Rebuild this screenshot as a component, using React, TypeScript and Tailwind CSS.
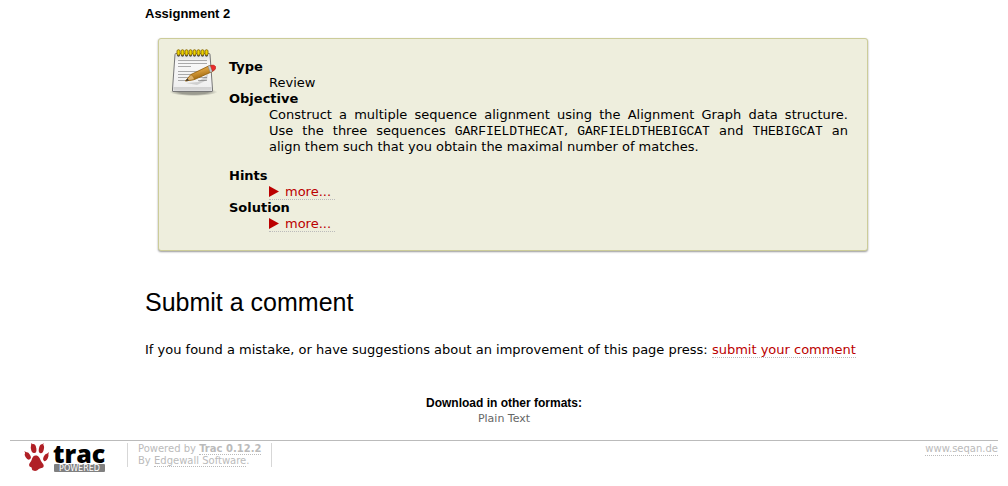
import React from 'react';

const linkLine = 'border-b border-dotted border-[#bbbbbb]';
const red = 'text-[#bb0000]';
const mono = "font-['Liberation_Mono',monospace] leading-3";

function NotepadIcon() {
  const rings = [0, 1, 2, 3, 4, 5, 6, 7];
  return (
    <svg width="48" height="48" viewBox="0 0 48 48" className="shrink-0" aria-hidden="true">
      <defs>
        <linearGradient id="paper" x1="0" y1="0" x2="0" y2="1">
          <stop offset="0" stopColor="#dcdcdc" />
          <stop offset="0.25" stopColor="#f8f8f8" />
          <stop offset="1" stopColor="#eeeeee" />
        </linearGradient>
        <linearGradient id="wood" x1="0" y1="0" x2="0.5" y2="1">
          <stop offset="0" stopColor="#f0c066" />
          <stop offset="0.5" stopColor="#d39838" />
          <stop offset="1" stopColor="#8f5902" />
        </linearGradient>
        <radialGradient id="shade">
          <stop offset="0.6" stopColor="#000" stopOpacity="0.35" />
          <stop offset="1" stopColor="#000" stopOpacity="0" />
        </radialGradient>
      </defs>
      <ellipse cx="23.5" cy="43" rx="24" ry="4" fill="url(#shade)" />
      <path d="M5 5.5 Q5 4.5 6 4.5 H39 Q40 4.5 40 5.5 L42.5 40 V42 Q42.5 42.5 42 42.5 H3 Q2.5 42.5 2.5 42 V40 Z" fill="url(#paper)" stroke="#777" />
      <path d="M3.5 39 H41.5" stroke="#b5b5b5" />
      <path d="M3.5 40.7 H41.5" stroke="#d5d5d5" strokeWidth="2" />
      <path d="M8 11.5 H37 M8 14.5 H37 M8 17.5 H21 M8 22.5 H31 M8 25.5 H25 M8 28.5 H20 M8 31.5 H15 M29 28.5 H37 M28 31.5 H37" stroke="#aaa" />
      <path d="M16 34 L28 33 L38 25 L37 31 L27 36 Z" fill="#000" opacity="0.14" />
      <path d="M15.5 32 L21 25.5 L38.5 17 Q42.5 15.5 45 17.5 Q46 20.5 42.5 22.5 L24.5 30.5 Z" fill="url(#wood)" stroke="#8f5902" strokeWidth="0.8" />
      <path d="M21 25.5 L15.5 32 L24.5 30.5 L23.5 28 Z" fill="#dcb06a" stroke="#8f5902" strokeWidth="0.5" />
      <path d="M15.5 32 L17.5 29.5 L19 31.5 Z" fill="#333" />
      <path d="M38 17.3 L40.2 16.4 L42.4 22.4 L40.3 23.5 Z" fill="#c7ccd2" stroke="#777" strokeWidth="0.4" />
      <path d="M40.5 16.4 Q43.8 15.3 45.5 17.5 Q46.4 20.6 42.7 22.3 Z" fill="#ee2a2a" stroke="#b43535" strokeWidth="0.6" />
      {rings.map((i) => (
        <g key={i}>
          <circle cx={8.5 + i * 4} cy="6.3" r="1.4" fill="#444" />
          <rect x={7 + i * 4} y="0.7" width="3" height="5.5" rx="1.5" fill="#edd400" stroke="#8a6a00" strokeWidth="0.9" />
        </g>
      ))}
    </svg>
  );
}

function TracLogo() {
  return (
    <svg width="82" height="30" viewBox="0 0 82 30" role="img" aria-label="Trac Powered" className="overflow-visible">
      <g fill="#b02026">
        <ellipse cx="9.6" cy="5.6" rx="2.7" ry="4.5" transform="rotate(-10 9.6 5.6)" />
        <ellipse cx="17.4" cy="5.8" rx="2.5" ry="4.5" transform="rotate(12 17.4 5.8)" />
        <ellipse cx="3.8" cy="13" rx="2.5" ry="3.9" transform="rotate(-32 3.8 13)" />
        <ellipse cx="21.8" cy="14.4" rx="2.2" ry="3.9" transform="rotate(24 21.8 14.4)" />
        <path d="M11.5 12.5 C14.5 12.2 15.7 15 17 18 C18.5 20.5 20.3 21.5 19.6 23.5 C18.8 25.6 16.2 24.8 14.8 26 C13.2 27.6 11.5 28.6 9.3 27.6 C7 26.5 8.6 24.6 6.8 24 C4.4 23.2 4.8 20.8 6.5 19 C8.2 17 8 12.8 11.5 12.5 Z" />
        <path d="M7.5 0 L6.9 3 L9.4 2 Z M19.6 0 L16.8 2.8 L19 3.6 Z M0.4 8 L1.6 11.6 L3.4 10 Z M25 9 L21.6 12 L23.9 12.8 Z" />
      </g>
      <text x="29" y="20" fontFamily="'Open Sans', sans-serif" fontWeight="800" fontSize="25" fill="#000">
        trac
      </text>
      <rect x="30" y="21" width="51" height="8" rx="1" fill="#808080" />
      <text x="55.5" y="28" textAnchor="middle" fontFamily="'DejaVu Sans', sans-serif" fontSize="8" fill="#fff">
        POWERED
      </text>
    </svg>
  );
}

function MoreLink({ label }: { label: string }) {
  return (
    <a href="#more" aria-label={label} className={`inline-flex h-4 items-center gap-1.5 pr-1 ${linkLine} ${red}`}>
      <svg width="10" height="11" viewBox="0 0 10 11" aria-hidden="true">
        <path d="M0 0 L10 5.5 L0 11 Z" fill="#bb0000" />
      </svg>
      more...
    </a>
  );
}

export default function App() {
  return (
    <div className="bg-white px-2.5 font-['DejaVu_Sans',sans-serif] text-[13px] leading-4 text-black">
      <main className="ml-[135px] mr-[117px] pt-1.5">
        <h4 className="font-['Liberation_Sans',sans-serif] text-[13px] font-bold leading-4">Assignment 2</h4>

        <section className="mx-[13px] mt-4 flex gap-[11px] rounded-[3px] border border-[#cccc99] bg-[#eeeedd] pb-[18px] pl-[11px] pr-[19px] pt-[10px] shadow-[0_1px_2px_#999999]">
          <NotepadIcon />
          <dl className="min-w-0 flex-1 pt-2.5">
            <dt className="font-bold">Type</dt>
            <dd className="ml-10">Review</dd>
            <dt className="font-bold">Objective</dt>
            <dd className="mb-[13px] ml-10">
              <span className="block text-justify [text-align-last:justify]">
                Construct a multiple sequence alignment using the Alignment Graph data structure.
              </span>
              <span className="block text-justify [text-align-last:justify]">
                Use the three sequences <code className={mono}>GARFIELDTHECAT</code>,{' '}
                <code className={mono}>GARFIELDTHEBIGCAT</code> and <code className={mono}>THEBIGCAT</code> an
              </span>
              <span className="block">align them such that you obtain the maximal number of matches.</span>
            </dd>
            <dt className="font-bold">Hints</dt>
            <dd className="ml-10 flex"><MoreLink label="more... hints" /></dd>
            <dt className="font-bold">Solution</dt>
            <dd className="ml-10 flex"><MoreLink label="more... solution" /></dd>
          </dl>
        </section>

        <h1 className="mt-[35px] font-['Liberation_Sans',sans-serif] text-[25px] leading-8">Submit a comment</h1>
        <p className="mt-6 whitespace-nowrap">
          If you found a mistake, or have suggestions about an improvement of this page press:{' '}
          <a href="#comment" className={`${linkLine} ${red}`}>submit your comment</a>
        </p>
      </main>

      <section className="mt-[37px] text-center">
        <h3 className="font-['Liberation_Sans',sans-serif] text-[12px] font-bold leading-4">Download in other formats:</h3>
        <a href="#text" className="block text-[11px] leading-4 text-[#666666]">Plain Text</a>
      </section>

      <footer className="mt-[13px] flex items-start border-t border-[#bbbbbb] pt-0.5 text-[10px] leading-3 text-[#bbbbbb]">
        <a href="#trac" className="ml-3.5 mr-[21px]"><TracLogo /></a>
        <p className="border-x border-[#d7d7d7] px-2.5">
          Powered by <a href="#about" className={`font-bold ${linkLine}`}>Trac 0.12.2</a>
          <br />
          By <a href="#edgewall" className={linkLine}>Edgewall Software</a>.
        </p>
        <a href="#seqan" className={`ml-auto ${linkLine}`}>www.seqan.de</a>
      </footer>
    </div>
  );
}
